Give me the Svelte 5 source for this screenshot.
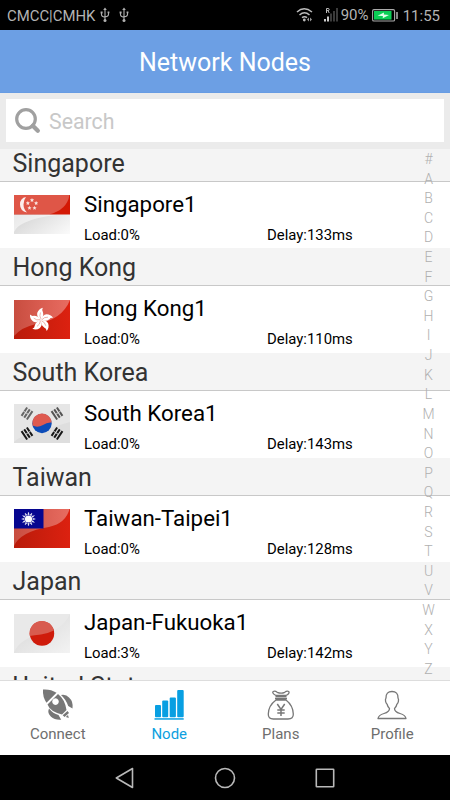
<script>
  const nodes = [
    { region: 'Singapore', name: 'Singapore1', load: 0, delay: 133, flag: 'sg' },
    { region: 'Hong Kong', name: 'Hong Kong1', load: 0, delay: 110, flag: 'hk' },
    { region: 'South Korea', name: 'South Korea1', load: 0, delay: 143, flag: 'kr' },
    { region: 'Taiwan', name: 'Taiwan-Taipei1', load: 0, delay: 128, flag: 'tw' },
    { region: 'Japan', name: 'Japan-Fukuoka1', load: 3, delay: 142, flag: 'jp' }
  ];
  const letters = '#ABCDEFGHIJKLMNOPQRSTUVWXYZ'.split('');
  const petals = [0, 72, 144, 216, 288];
  const rays = Array.from({ length: 12 }, (_, i) => i * 30);
  const trigrams = [
    { x: 13, y: 9.5, r: -56, c: '#666' },
    { x: 43, y: 9.5, r: 56, c: '#555' },
    { x: 13, y: 29.5, r: 56, c: '#181818' },
    { x: 43, y: 29.5, r: -56, c: '#181818' }
  ];
</script>

{#snippet usb()}
  <svg class="usb" width="10" height="16" viewBox="0 0 10 16" fill="none" stroke="#b0b0b0" stroke-width="1.1">
    <path d="M5 2v11M1.5 5.5v2.2q0 1.8 3.5 2.500M8.5 5.5v2q0 1.8-3.5 2.500" />
    <path d="M5 .5 3.2 3h3.6zM.6 4.5h2v2h-2zM7.6 4.5h1.8v1.8H7.6z" fill="#b0b0b0" stroke="none" />
    <circle cx="5" cy="13.4" r="1.5" fill="#b0b0b0" stroke="none" />
  </svg>
{/snippet}

<div class="screen">
  <div class="status">
    <span class="carrier">CMCC|CMHK</span>
    {@render usb()}
    {@render usb()}
    <span class="grow"></span>
    <svg class="wifi" width="18" height="16" viewBox="0 0 18 16" fill="none" stroke="#bcbcbc" stroke-width="1.5">
      <path d="M1 5q7-6.4 15 0M3.5 8q5-4.4 10 0M6 10.7q2.6-2 5 0" />
      <circle cx="8.3" cy="13" r="1.4" fill="#bcbcbc" stroke="none" />
      <path d="M13 10.5v4l-2-2zM14 10.5l2 2-2 2z" fill="#999" stroke="none" />
    </svg>
    <svg class="signal" width="15" height="16" viewBox="0 0 15 16">
      <path d="M0 12h2v2.5H0zM3 9.5h2v5H3z" fill="#ccc" />
      <path d="M6 6.5h2v8H6zM9 4h2v10.500H9zM12 1h2v13.500h-2z" fill="#3b3b3b" />
      <path d="M2.500 6V1.500h1.600q1.100 0 1.100 1t-1.100 1.100H2.500M4 3.600 5.200 6" fill="none" stroke="#bbb" />
    </svg>
    <span class="pct">90%</span>
    <svg class="battery" width="27" height="13" viewBox="0 0 27 13">
      <rect x=".6" y=".6" width="22" height="11.400" rx="1.300" fill="none" stroke="#aaa" stroke-width="1.100" />
      <path d="M2 2h17.500v8.600H2z" fill="#0cce56" />
      <path d="M5.500 6.700 12 3.500l-.2 1.900 5.200.6-6.300 3.200.2-2.200z" fill="#e2ffe9" />
      <path d="M24.200 3h1.600v7h-1.600z" fill="#aaa" />
    </svg>
    <span class="time">11:55</span>
  </div>

  <header><span>Network Nodes</span></header>

  <div class="searchbar">
    <div class="field">
      <svg width="27" height="27" viewBox="0 0 27 27" fill="none" stroke="#a0a0a0">
        <circle cx="12" cy="12" r="9.300" stroke-width="3.200" />
        <path d="m18.800 18.800 5 5" stroke-width="4.300" stroke-linecap="round" />
      </svg>
      <span>Search</span>
    </div>
  </div>

  <div class="content">
    <div class="list">
      {#each nodes as n}
        <section>
          <h2>{n.region}</h2>
          <div class="row">
            <svg class="flag" width="56" height="39" viewBox="0 0 56 39">
              <defs>
                <linearGradient id="red-{n.flag}" x1="0" y1="0" x2="1" y2="0">
                  <stop offset="0" stop-color="#b91b0a" /><stop offset="1" stop-color="#dc2110" />
                </linearGradient>
                <linearGradient id="grey-{n.flag}" x1="0" y1="0" x2="1" y2="1">
                  <stop offset="0" stop-color="#c4c4c4" /><stop offset="1" stop-color="#fbfbfb" />
                </linearGradient>
                <linearGradient id="gloss-{n.flag}" x1="0" y1="0" x2="1" y2="0">
                  <stop offset="0" stop-color="#fff" stop-opacity=".22" /><stop offset="1" stop-color="#fff" stop-opacity=".34" />
                </linearGradient>
              </defs>
              {#if n.flag === 'sg'}
                <path d="M0 0h56v39H0z" fill="url(#grey-sg)" />
                <path d="M0 20h43Q22 22 10 28 3 31 0 37z" fill="#fff" opacity=".5" />
                <path d="M0 0h56v19.500H0z" fill="#d31804" />
                <path d="M0 0h55.500Q53 15 35 19.500H0z" fill="#fff" opacity=".27" />
                <path d="M12 2q-6 1-6 7.500T13 17.500Q9.500 14 9.500 9.500T12 2z" fill="#fff" opacity=".9" />
                <g fill="#f9e4e0">
                  {#each petals as a}
                    <path transform="rotate({a} 18 9.500)" d="m18 3 .6 1.300 1.500.2-1.100 1 .3 1.400-1.300-.7-1.300.7.3-1.400-1.100-1 1.500-.2z" />
                  {/each}
                </g>
              {:else if n.flag === 'hk'}
                <path d="M0 0h56v39H0z" fill="url(#red-hk)" />
                <path d="M0 0h56Q48 20 22 24 8 27 0 36z" fill="url(#gloss-hk)" />
                <g fill="#fff">
                  {#each petals as a}
                    <path transform="translate(27 20) rotate({a})" d="M0 0Q-4.500-3-3.800-7-2.500-11 1.800-12.200.6-9.700 1.800-8.300 3.300-4 0 0z" />
                  {/each}
                </g>
                <g fill="none" stroke="#e58a80" stroke-width=".6">
                  {#each petals as a}
                    <path transform="translate(27 20) rotate({a})" d="M0-1Q-2-4-.5-7.500" />
                  {/each}
                </g>
              {:else if n.flag === 'kr'}
                <path d="M0 0h56v39H0z" fill="#e6e6e6" />
                <path d="M56 0v18Q35 24 15 30 5 33 0 38v1h56z" fill="#dedede" />
                <circle cx="28" cy="19.500" r="9.700" fill="#0c4cb8" />
                <path d="M18.500 21.500A9.700 9.700 0 1 1 37.600 18.500Q33 18 29 21 23.500 24 18.500 21.500z" fill="#de5a50" />
                {#each trigrams as t}
                  <g transform="translate({t.x} {t.y}) rotate({t.r})" stroke={t.c} stroke-width="2">
                    <path d="M-5-3.200H5M-5 0H5M-5 3.200H5" />
                    <path d="M0-4.500v6" stroke="#e0e0e0" stroke-width=".8" />
                  </g>
                {/each}
              {:else if n.flag === 'tw'}
                <path d="M0 0h56v39H0z" fill="url(#red-tw)" />
                <path d="M0 0h55.500Q52 14 35 18 21 20 12 25 3 30 0 37z" fill="url(#gloss-tw)" />
                <path d="M0 0h29.500v19.500H0z" fill="#060690" />
                <g fill="#fff">
                  <circle cx="14.500" cy="10" r="3.600" />
                  {#each rays as a}
                    <path transform="translate(14.500 10) rotate({a})" d="M-.8-4.300 0-6.900l.8 2.600z" stroke="#fff" stroke-width=".3" />
                  {/each}
                </g>
              {:else}
                <path d="M0 0h56v39H0z" fill="#e9e9e9" />
                <path d="M56 0Q48 17 26 21 7 24 0 38v1h56z" fill="url(#grey-jp)" opacity=".55" />
                <circle cx="28" cy="19.500" r="12.200" fill="#cf1b0b" />
                <path d="M15.800 22a12.200 12.200 0 0 1 24-5.500Q34 19.500 27 20.500 20 21 15.800 22z" fill="#d85b4f" />
              {/if}
            </svg>
            <div class="info">
              <div class="name">{n.name}</div>
              <div class="stats"><span class="load">Load:{n.load}%</span><span class="delay">Delay:{n.delay}ms</span></div>
            </div>
          </div>
        </section>
      {/each}
      <section><h2>United States</h2></section>
    </div>
    <div class="index">
      {#each letters as l}<span>{l}</span>{/each}
    </div>
  </div>

  <nav class="tabs">
    <div class="tab">
      <svg width="32" height="32" viewBox="0 0 32 32" fill="#777">
        <path d="M1 .500Q9 0 14.500 3.800L4.500 13.800Q.5 8 1 .500z" />
        <path fill-rule="evenodd" d="M16 5q7 5.500 8.500 16L20 25.500Q8 22.500 5.500 15.500zM13.500 9.300a3.300 3.300 0 1 0 .01 0z" />
        <path d="M19 6q5-1 8 2.500 4.500 4 3.500 11l-4.300-2.500Q24 10.500 19 6zM7 19.500q4 5 9.500 6.500l2.700 4.700q-6.500.5-10.200-3Q5 24 7 19.500z" />
        <path d="m25.500 22 1.500 2-4.500 4-1.800-1.700zM26 26l.8 3-3-1z" />
      </svg>
      <span>Connect</span>
    </div>
    <div class="tab active">
      <svg width="32" height="32" viewBox="0 0 32 32" fill="#089fe2">
        <rect x="2" y="16" width="6" height="12.300" rx="1" />
        <rect x="9.200" y="11.500" width="6" height="16.800" rx="1" />
        <rect x="16.700" y="8.500" width="6.200" height="19.800" rx="1" />
        <rect x="24.200" y="1" width="6.500" height="27.300" rx="1" />
        <path d="M1.500 29.200h29.200v1.500H1.500z" />
      </svg>
      <span>Node</span>
    </div>
    <div class="tab">
      <svg width="32" height="32" viewBox="0 0 32 32" fill="none" stroke="#777" stroke-width="1.300">
        <path d="M11 6.500Q6.500 4 8.200 2.500q1.800-1 4 .8 4 1.700 7.500 0 2.300-1.800 4-.8 1.500 1.800-2.700 4zM10.500 7.500h11M10 9.500h12M11 11Q3.500 16.500 3.300 25q-.2 5 5 5H23q5.500 0 5.300-5Q28 16.500 21 11z" />
        <path d="m12.300 15 3.700 5.500 3.700-5.500M16 20.500V27M12.300 21h7.400M12.300 24h7.400" stroke-width="1.500" />
      </svg>
      <span>Plans</span>
    </div>
    <div class="tab">
      <svg width="32" height="32" viewBox="0 0 32 32" fill="none" stroke="#777" stroke-width="1.300" stroke-linejoin="round">
        <path d="M16 2.500c-4 0-6.200 2.300-6 6.500-1.300 2 0 5.500 1 6 .5 2 1.200 3.500 2.500 4.500 0 3-2 4-5.500 5-4 1.200-5.500 2.300-6 5h28c-.5-2.700-2-3.800-6-5-3.500-1-5.500-2-5.500-5 1.300-1 2-2.500 2.500-4.500 1-.5 2.300-4 1-6 .2-4.200-2-6.500-6-6.500z" />
      </svg>
      <span>Profile</span>
    </div>
  </nav>

  <div class="softkeys">
    <svg width="22" height="22" viewBox="0 0 22 22"><path d="M2.300 11 18.500 1.500v19z" /></svg>
    <svg width="22" height="22" viewBox="0 0 22 22"><circle cx="11" cy="11" r="9.500" /></svg>
    <svg width="22" height="22" viewBox="0 0 22 22"><rect x="2.300" y="2.300" width="17.400" height="17.400" rx=".5" /></svg>
  </div>
</div>

<style>
  .screen { width: 450px; height: 800px; display: flex; flex-direction: column; overflow: hidden; background: #fff; font-family: Roboto, sans-serif; color: #111; }
  .screen svg { display: block; flex: none; }
  .status { height: 30px; flex: none; box-sizing: border-box; background: #000; color: #b4b4b4; display: flex; align-items: center; padding: 0 10px 0 7px; }
  .carrier { font-size: 14.900px; margin-right: 4.500px; white-space: nowrap; padding-top: 1px; }
  .usb { margin-right: 9px; }
  .grow { flex: 1; }
  .wifi { margin-right: 10px; }
  .signal { margin-right: 2px; }
  .pct { font-size: 15px; margin-right: 4px; width: 27.500px; }
  .battery { margin-right: 3.500px; }
  .time { font-size: 15px; padding-top: 2px; }
  header { height: 63px; flex: none; box-sizing: border-box; background: #6c9fe4; border-bottom: 1px solid #679ce3; color: #fff; font-size: 25px; display: flex; align-items: center; justify-content: center; padding-top: 3px; }
  .searchbar { height: 56px; flex: none; box-sizing: border-box; background: #ebebeb; padding: 6px 6px 7px; }
  .field { height: 43px; background: #fff; display: flex; align-items: center; padding-left: 8px; gap: 8px; color: #c8c8c8; font-size: 21.300px; }
  .field span { padding-top: 1px; }
  .content { height: 531px; flex: none; display: flex; overflow: hidden; position: relative; }
  .list { flex: 1; margin-top: -5.400px; }
  section { height: 104.650px; display: flex; flex-direction: column; }
  h2 { margin: 0; height: 38px; flex: none; box-sizing: border-box; background: #f4f4f4; border-bottom: 1.500px solid #c8c8c8; font-size: 25px; font-weight: 400; line-height: 39.500px; padding-left: 12.500px; color: #333; }
  .row { flex: 1; display: flex; padding: 13.500px 0 0 14px; }
  .info { flex: 1; margin: -4.500px 0 0 14px; color: #000; }
  .name { font-size: 22.300px; line-height: 26px; }
  .stats { display: flex; font-size: 14.900px; line-height: 18px; margin-top: 9px; }
  .load { width: 183px; }
  .index { position: absolute; top: 1px; right: 11px; width: 21px; display: flex; flex-direction: column; color: #b0b0b0; font-size: 14px; font-weight: 300; text-align: center; }
  .index span { height: 19.620px; line-height: 19.620px; }
  .tabs { height: 75px; flex: none; box-sizing: border-box; border-top: 1px solid #ddd; display: flex; padding: 0 2px; }
  .tab { flex: 1; display: flex; flex-direction: column; align-items: center; padding-top: 8px; color: #6e6e6e; font-size: 15px; }
  .tab span { line-height: 18px; margin-top: 4px; }
  .tab.active { color: #0d9fe0; }
  .softkeys { flex: 1; background: #000; display: flex; justify-content: center; align-items: center; gap: 78px; fill: none; stroke: #b9b9b9; stroke-width: 1.600; stroke-linejoin: round; }
</style>
